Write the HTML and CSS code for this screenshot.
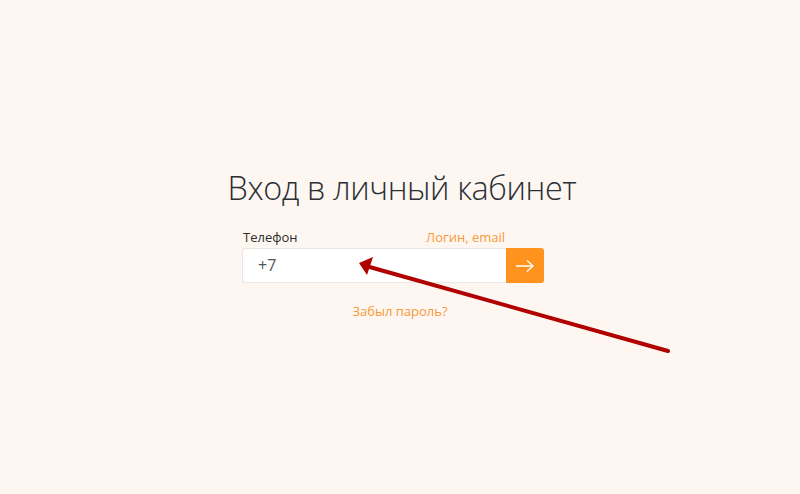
FILE: index.html
```html
<!DOCTYPE html>
<html lang="ru">
<head>
<meta charset="utf-8">
<link rel="stylesheet" href="styles.css">
</head>
<body>
<main class="page">
  <h1 class="title">Вход в личный кабинет</h1>
  <form class="form">
    <div class="labels">
      <span class="label">Телефон</span>
      <a class="switch" href="#">Логин, email</a>
    </div>
    <div class="row">
      <div class="input">+7</div>
      <button class="go" type="button">
        <svg width="20" height="14" viewBox="0 0 20 14"><path d="M1 7H18M12 1.5L18 7L12 12.5" fill="none" stroke="#fff" stroke-width="1.3"/></svg>
      </button>
    </div>
  </form>
  <a class="forgot" href="#">Забыл пароль?</a>
</main>
<svg class="annot" width="800" height="494" viewBox="0 0 800 494">
  <line x1="668" y1="351" x2="366" y2="266" stroke="#b00000" stroke-width="4" stroke-linecap="round"/>
  <polygon points="359,263 373,257 367,275" fill="#b00000"/>
</svg>
</body>
</html>
```
FILE: styles.css
```css
html, body {
  margin: 0;
  padding: 0;
  background: #fef7f1;
  width: 800px;
  height: 494px;
  overflow: hidden;
  position: relative;
}
.page {
  display: flex;
  flex-direction: column;
  align-items: center;
  padding-top: 164px;
  font-family: "Open Sans", "Noto Sans", sans-serif;
}
.title {
  margin: 0 0 0 4px;
  font-family: "Open Sans", sans-serif;
  font-weight: 300;
  font-size: 32.4px;
  line-height: 46px;
  color: #2b2f36;
  letter-spacing: -0.4px;
}
.form {
  width: 302px;
  margin: 19px 14px 0 0;
}
.labels {
  display: flex;
  justify-content: space-between;
  align-items: flex-end;
  height: 16px;
  padding: 0 39px 0 1px;
  margin-bottom: 3px;
}
.label {
  font-size: 13px;
  color: #2e2e2e;
  line-height: 16px;
}
.switch {
  font-size: 13px;
  color: #f7993b;
  text-decoration: none;
  line-height: 16px;
}
.row {
  display: flex;
  height: 35px;
}
.input {
  flex: 1;
  box-sizing: border-box;
  background: #fff;
  border: 1px solid #ebe6e1;
  border-right: none;
  border-radius: 3px 0 0 3px;
  padding-left: 15px;
  font-size: 16px;
  line-height: 33px;
  color: #555;
}
.go {
  width: 38px;
  height: 35px;
  border: none;
  background: #ff931e;
  border-radius: 0 3px 3px 0;
  padding: 0;
  display: flex;
  align-items: center;
  justify-content: center;
}
.forgot {
  margin-top: 19px;
  font-size: 13px;
  color: #f7993b;
  text-decoration: none;
  line-height: 18px;
}
.annot {
  position: absolute;
  left: 0;
  top: 0;
  pointer-events: none;
}
```
